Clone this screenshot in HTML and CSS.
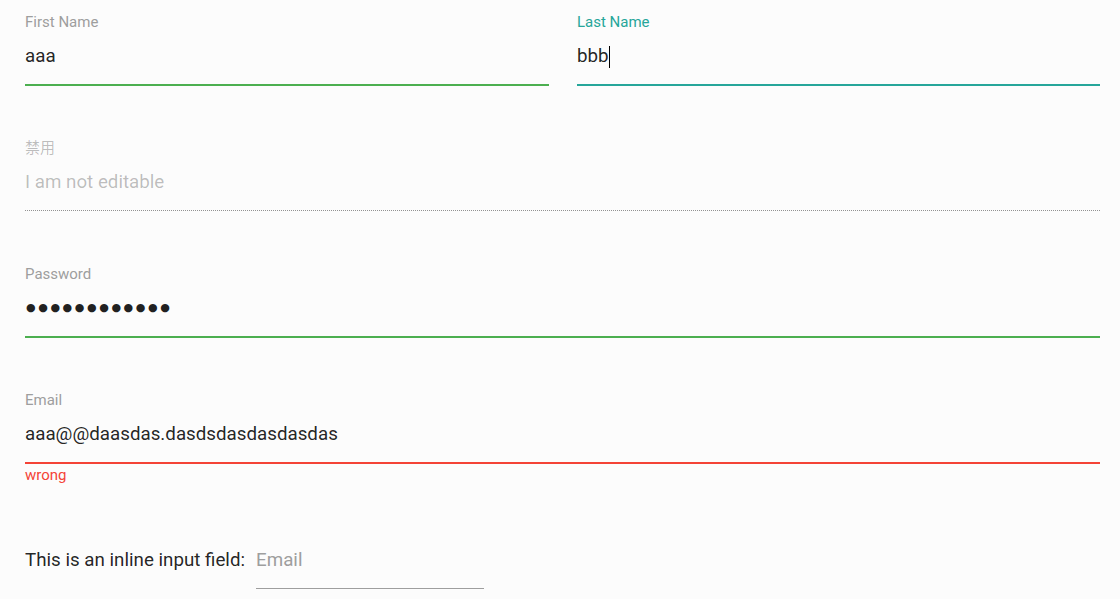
FILE: index.html
```html
<!DOCTYPE html>
<html lang="zh">
<head>
<meta charset="utf-8">
<title>Form</title>
<link rel="stylesheet" href="styles.css">
</head>
<body>
<form class="page">
  <div class="row-2">
    <div class="field">
      <label class="label">First Name</label>
      <div class="value line-valid">aaa</div>
    </div>
    <div class="field">
      <label class="label label-active">Last Name</label>
      <div class="value line-active">bbb<span class="caret"></span></div>
    </div>
  </div>
  <div class="field">
    <label class="label label-disabled">禁用</label>
    <div class="value value-disabled line-disabled">I am not editable</div>
  </div>
  <div class="field">
    <label class="label">Password</label>
    <div class="value value-password line-valid">●●●●●●●●●●●●</div>
  </div>
  <div class="field">
    <label class="label">Email</label>
    <div class="value line-invalid">aaa@@daasdas.dasdsdasdasdasdas</div>
    <span class="helper">wrong</span>
  </div>
  <div class="inline-row">
    <span class="inline-text">This is an inline input field:</span>
    <div class="inline-field">
      <div class="value value-placeholder line-default">Email</div>
    </div>
  </div>
</form>
</body>
</html>
```
FILE: styles.css
```css
html, body {
  margin: 0;
  padding: 0;
  background: #fcfcfc;
}
body {
  font-family: Roboto, "Noto Sans CJK SC", sans-serif;
  color: rgba(0, 0, 0, 0.87);
}
.page {
  padding: 14px 20px 0 25px;
  display: flex;
  flex-direction: column;
  gap: 55px;
}
.row-2 {
  display: grid;
  grid-template-columns: 524px 523px;
  column-gap: 28px;
}
.field {
  display: flex;
  flex-direction: column;
}
.label {
  font-size: 15px;
  line-height: 16px;
  height: 16px;
  color: #9e9e9e;
}
.label-active { color: #26a69a; }
.label-disabled { color: rgba(0, 0, 0, 0.26); }
.value {
  margin-top: 2px;
  height: 48px;
  line-height: 48px;
  padding-bottom: 4px;
  font-size: 18.75px;
  color: rgba(0, 0, 0, 0.87);
  white-space: nowrap;
}
.line-valid {
  border-bottom: 1px solid #4caf50;
  box-shadow: 0 1px 0 0 #4caf50;
}
.line-active {
  border-bottom: 1px solid #26a69a;
  box-shadow: 0 1px 0 0 #26a69a;
}
.line-invalid {
  border-bottom: 1px solid #f44336;
  box-shadow: 0 1px 0 0 #f44336;
}
.line-disabled {
  border-bottom: 1px dotted rgba(0, 0, 0, 0.42);
}
.line-default {
  border-bottom: 1px solid #9e9e9e;
}
.value-disabled { color: rgba(0, 0, 0, 0.26); }
.value-password {
  font-family: "DejaVu Sans", sans-serif;
  font-size: 11px;
  letter-spacing: 2.6px;
  padding-left: 1px;
  color: #212121;
}
.value-placeholder { color: #9e9e9e; }
.caret {
  display: inline-block;
  width: 1px;
  height: 22px;
  background: #000;
  vertical-align: middle;
  margin-left: 0;
}
.helper {
  font-size: 15px;
  line-height: 16px;
  margin-top: 4px;
  color: #f44336;
}
.inline-row {
  display: flex;
  align-items: flex-start;
  gap: 11px;
  margin-top: -2px;
}
.inline-text {
  font-size: 18.75px;
  line-height: 48px;
  color: rgba(0, 0, 0, 0.87);
}
.inline-field {
  width: 228px;
}
.inline-field .value { margin-top: 0; }
```
